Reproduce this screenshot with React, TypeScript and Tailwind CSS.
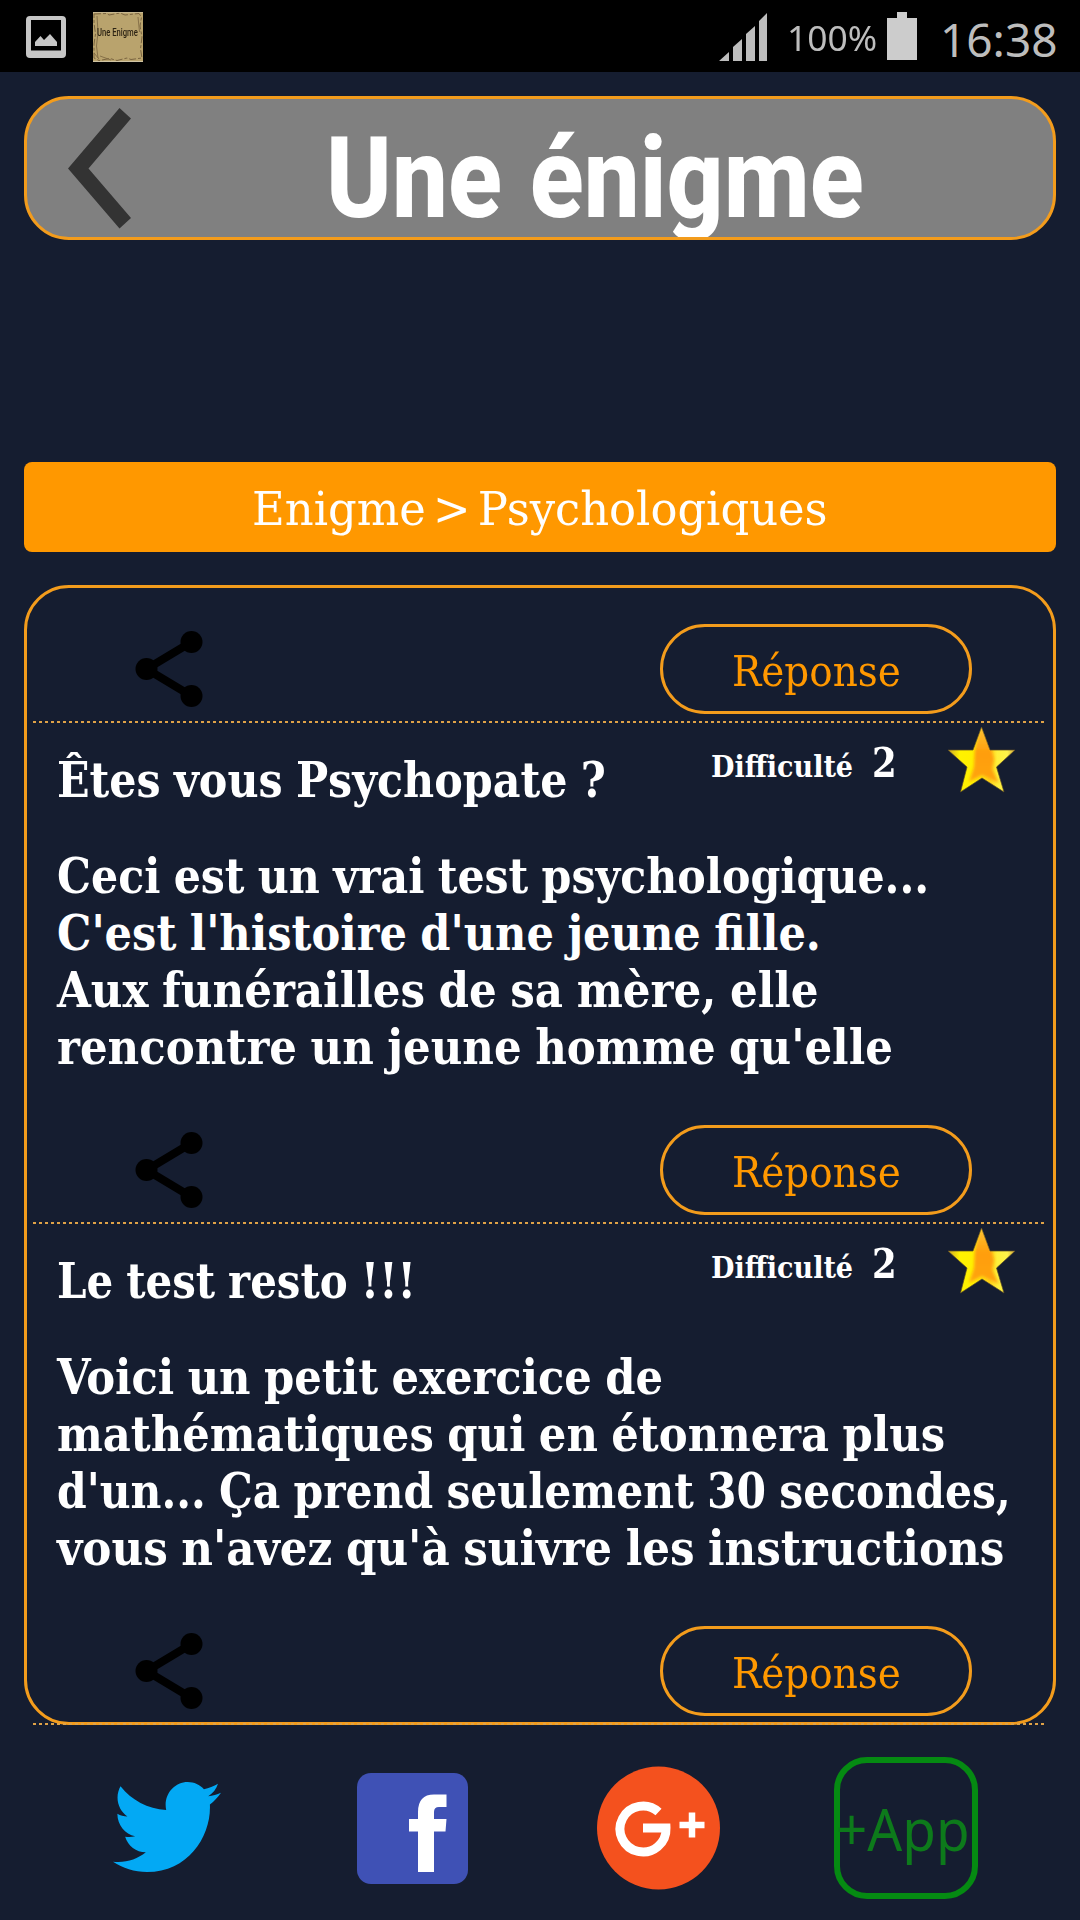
import { useLayoutEffect, useRef, useState, type ReactNode } from "react";
import { FaTwitter } from "react-icons/fa";

type Line = { text: string; width: number };

type Riddle = {
  title: Line;
  difficulty: number;
  lines: Line[];
};

const riddles: Riddle[] = [
  {
    title: { text: "Êtes vous Psychopate ?", width: 549 },
    difficulty: 2,
    lines: [
      { text: "Ceci est un vrai test psychologique...", width: 872 },
      { text: "C'est l'histoire d'une jeune fille.", width: 764 },
      { text: "Aux funérailles de sa mère, elle", width: 761 },
      { text: "rencontre un jeune homme qu'elle", width: 836 },
    ],
  },
  {
    title: { text: "Le test resto !!!", width: 359 },
    difficulty: 2,
    lines: [
      { text: "Voici un petit exercice de", width: 606 },
      { text: "mathématiques qui en étonnera plus", width: 888 },
      { text: "d'un... Ça prend seulement 30 secondes,", width: 954 },
      { text: "vous n'avez qu'à suivre les instructions", width: 947 },
    ],
  },
];

// Squeezes a single line of text horizontally to the given width
function FitText({ width, children }: { width: number; children: ReactNode }) {
  const ref = useRef<HTMLSpanElement>(null);
  const [scale, setScale] = useState(1);

  useLayoutEffect(() => {
    if (ref.current) setScale(width / ref.current.offsetWidth);
  }, [width]);

  return (
    <span className="block" style={{ width }}>
      <span
        ref={ref}
        className="inline-block origin-left whitespace-pre align-top"
        style={{ transform: `scaleX(${scale})` }}
      >
        {children}
      </span>
    </span>
  );
}

function StatusBar() {
  return (
    <div className="flex h-[72px] bg-black font-['Noto_Sans',sans-serif] text-[#bdbdbd]">
      <svg className="mt-4 ml-[26px] h-[42px] w-10" viewBox="0 0 40 42" fill="#c6c6c6">
        <path
          fillRule="evenodd"
          d="M4 0H36Q40 0 40 4V38Q40 42 36 42H4Q0 42 0 38V4Q0 0 4 0ZM5 4V34.500H35V4Z"
        />
        <path d="M9 30V26L14.500 20L18 24L24 18L31 26V30Z" />
      </svg>

      {/* App notification: parchment */}
      <div className="relative mt-3 ml-[27px] h-[50px] w-[50px] bg-[#b9a36d]">
        <svg className="absolute inset-0" viewBox="0 0 50 50" fill="none" stroke="#7a6440">
          <path
            d="M1 2L14 1.500L16 3L27 1L32 3L46 1.500L48.500 5L47 14L49 25L47.500 37L49 46L38 47.500L34 46L24 48.500L17 46.500L6 48.500L1 46V32L2.500 22L1 11Z"
            strokeDasharray="7 2 3 2"
          />
          <path d="M4 4L5 20L3.500 34L5 46M45 5L46.500 20M7 44L18 48M1 41L6 47" strokeWidth="0.8" />
          <path d="M0 0H50M0 49.700H50" stroke="#d5ccb2" />
        </svg>
        <div className="absolute top-[13px] left-1 font-['Roboto',sans-serif] text-[11px] leading-[16px] font-medium text-[#2d2414]">
          <FitText width={41}>Une Enigme</FitText>
        </div>
      </div>

      <svg className="mt-3 ml-[576px] h-[49px] w-[49px]" viewBox="0 0 49 49" fill="#bdbdbd">
        <path d="M0 49L10 40V49ZM14 49V35L23 27V49ZM27 49V22L36 14V49ZM40 49V9L48 1V49Z" />
      </svg>
      <div className="mt-[14px] ml-[19px] text-[35px] leading-[48px]">
        <FitText width={90}>100%</FitText>
      </div>
      <svg className="mt-3 ml-[10px] h-12 w-[30px]" viewBox="0 0 30 48" fill="#cccccc">
        <path d="M10 0H20V6H30V48H0V6H10Z" />
      </svg>
      <div className="mt-[7px] ml-[23px] text-[46px] leading-[64px]">
        <FitText width={118}>16:38</FitText>
      </div>
    </div>
  );
}

function ShareIcon() {
  return (
    <svg className="h-[76px] w-[68px]" viewBox="0 0 68 76">
      <path d="M56.500 11L11.500 38L56.500 65" fill="none" stroke="#000" strokeWidth="8" />
      <circle cx="56.500" cy="11" r="11" />
      <circle cx="11.500" cy="38" r="11" />
      <circle cx="56.500" cy="65" r="11" />
    </svg>
  );
}

function StarIcon() {
  return (
    <svg className="h-[70px] w-[70px]" viewBox="0 0 70 70">
      <defs>
        <linearGradient id="star" x1="0" y1="0" x2="1" y2="0">
          <stop offset="0" stopColor="#c9a02c" />
          <stop offset="0.18" stopColor="#fff200" />
          <stop offset="0.36" stopColor="#fff000" />
          <stop offset="0.62" stopColor="#ffd21a" />
          <stop offset="0.72" stopColor="#fff03a" />
          <stop offset="0.86" stopColor="#fff34a" />
          <stop offset="1" stopColor="#c9963a" />
        </linearGradient>
        <linearGradient id="star-core" x1="0" y1="0" x2="0" y2="1">
          <stop offset="0" stopColor="#ffc83c" />
          <stop offset="0.5" stopColor="#ff9d0a" />
          <stop offset="1" stopColor="#ffa512" />
        </linearGradient>
        <filter id="star-soft">
          <feGaussianBlur stdDeviation="1.600" />
        </filter>
        <clipPath id="star-shape">
          <path d="M34.500 2L43 25L68 25L49.500 42L57 67L35 53L13.500 67L20 42L1 25L26 25Z" />
        </clipPath>
      </defs>
      <g clipPath="url(#star-shape)">
        <path d="M0 0H70V70H0Z" fill="url(#star)" />
        <path
          d="M34.500 -2L44 22L47 34L45 44L52 58L35 50L22 57L27 42L28 24Z"
          fill="url(#star-core)"
          filter="url(#star-soft)"
        />
      </g>
      <path
        d="M34.500 2L43 25L68 25L49.500 42L57 67L35 53L13.500 67L20 42L1 25L26 25Z"
        fill="none"
        stroke="#5c4c27"
        strokeWidth="1"
        opacity="0.7"
      />
    </svg>
  );
}

function ActionRow() {
  return (
    <>
      <div className="flex h-[90px] items-center pl-[108px]">
        <ShareIcon />
        <button className="ml-[457px] flex h-[90px] w-[312px] justify-center rounded-full border-3 border-[#f39c1c] pt-[15px] pr-1 text-[42px] leading-[60px] text-[#ff9800]">
          <FitText width={169}>Réponse</FitText>
        </button>
      </div>
      <div className="mt-[7px] ml-[6px] h-[2px] w-[1011px] bg-[repeating-linear-gradient(90deg,#dfa247_0_3px,transparent_3px_6px)]" />
    </>
  );
}

function RiddleBlock({ riddle }: { riddle: Riddle }) {
  return (
    <div className="h-[402px] pl-[30px] font-bold text-white [word-spacing:-0.1em]">
      <div className="flex h-[87px]">
        <div className="w-[654px] pt-[29px] text-[48px] leading-[57px]">
          <FitText width={riddle.title.width}>{riddle.title.text}</FitText>
        </div>
        <div className="flex w-[236px] items-baseline gap-[19px] pt-[20px]">
          <div className="text-[30px] leading-[36px]">
            <FitText width={142}>Difficulté</FitText>
          </div>
          <div className="text-[41px] leading-[41px]">
            <FitText width={25}>{riddle.difficulty}</FitText>
          </div>
        </div>
        <div className="pt-[2px]">
          <StarIcon />
        </div>
      </div>
      <div className="mt-[38px] text-[48px] leading-[57px]">
        {riddle.lines.map((line) => (
          <FitText key={line.text} width={line.width}>
            {line.text}
          </FitText>
        ))}
      </div>
    </div>
  );
}

function SocialBar() {
  return (
    <div className="flex h-[195px] items-center pt-[11px] pl-[113px]">
      <FaTwitter
        className="mb-[2px] h-[90px] w-[108px] text-[#03a9f4]"
        viewBox="0 48 512 416"
        preserveAspectRatio="none"
      />

      <svg className="ml-[136px] h-[111px] w-[111px]" viewBox="0 0 111 111">
        <rect width="111" height="111" rx="14" fill="#3f51b5" />
        <path
          d="M61 99V58.500H52V46H61V39Q61 21.500 77 21.500H89.500V34H82Q77 34 77 39V46H89.500L88.500 58.500H77V99Z"
          fill="#fff"
        />
      </svg>

      <svg className="ml-[129px] h-[124px] w-[124px]" viewBox="0 0 124 124" fill="none" stroke="#fff">
        <circle cx="61.500" cy="62" r="61.500" fill="#f4511e" stroke="none" />
        <path d="M61.500 46A23 23 0 1 0 69 62H46" strokeWidth="9" />
        <path d="M95 46.500V71.500M82.500 59H107.500" strokeWidth="6.500" />
      </svg>

      <div className="ml-[113px] flex h-[142px] w-[144px] rounded-[33px] border-[6px] border-[#058a12] pt-[26px] font-['Noto_Sans',sans-serif] text-[58px] leading-[80px] text-[#0d7a1b]">
        <div className="-ml-[4px]">
          <FitText width={134}>+App</FitText>
        </div>
      </div>
    </div>
  );
}

export default function App() {
  return (
    <div className="h-[1920px] w-[1080px] overflow-hidden bg-[#151d30] font-['DejaVu_Serif_Condensed','DejaVu_Serif',serif]">
      <StatusBar />

      {/* Header */}
      <div className="mx-6 mt-6 flex h-36 overflow-hidden rounded-[45px] border-3 border-[#f39c1c] bg-[#808080]">
        <svg className="mt-[9px] ml-[41px] h-[121px] w-16" viewBox="0 0 64 121" fill="#333">
          <path d="M51.500 0L63 10.500L20.500 60.500L63 110L51.500 120.500L0 60.500Z" />
        </svg>
        <h1 className="mt-[12px] ml-[194px] font-['Roboto',sans-serif] text-[114px] leading-[134px] font-extrabold text-white [word-spacing:0.03em]">
          <FitText width={538}>Une énigme</FitText>
        </h1>
      </div>

      {/* Breadcrumb */}
      <div className="mx-6 mt-[222px] flex h-[90px] justify-center rounded-lg bg-[#ff9800] pt-[18px] text-[47px] leading-[57px] text-white [word-spacing:-0.14em]">
        <FitText width={576}>Enigme &gt; Psychologiques</FitText>
      </div>

      {/* Riddle list */}
      <div className="mx-6 mt-[33px] h-[1140px] rounded-[45px] border-3 border-[#f39c1c] pt-9">
        <ActionRow />
        {riddles.map((riddle) => (
          <div key={riddle.title.text}>
            <RiddleBlock riddle={riddle} />
            <ActionRow />
          </div>
        ))}
      </div>

      <SocialBar />
    </div>
  );
}
